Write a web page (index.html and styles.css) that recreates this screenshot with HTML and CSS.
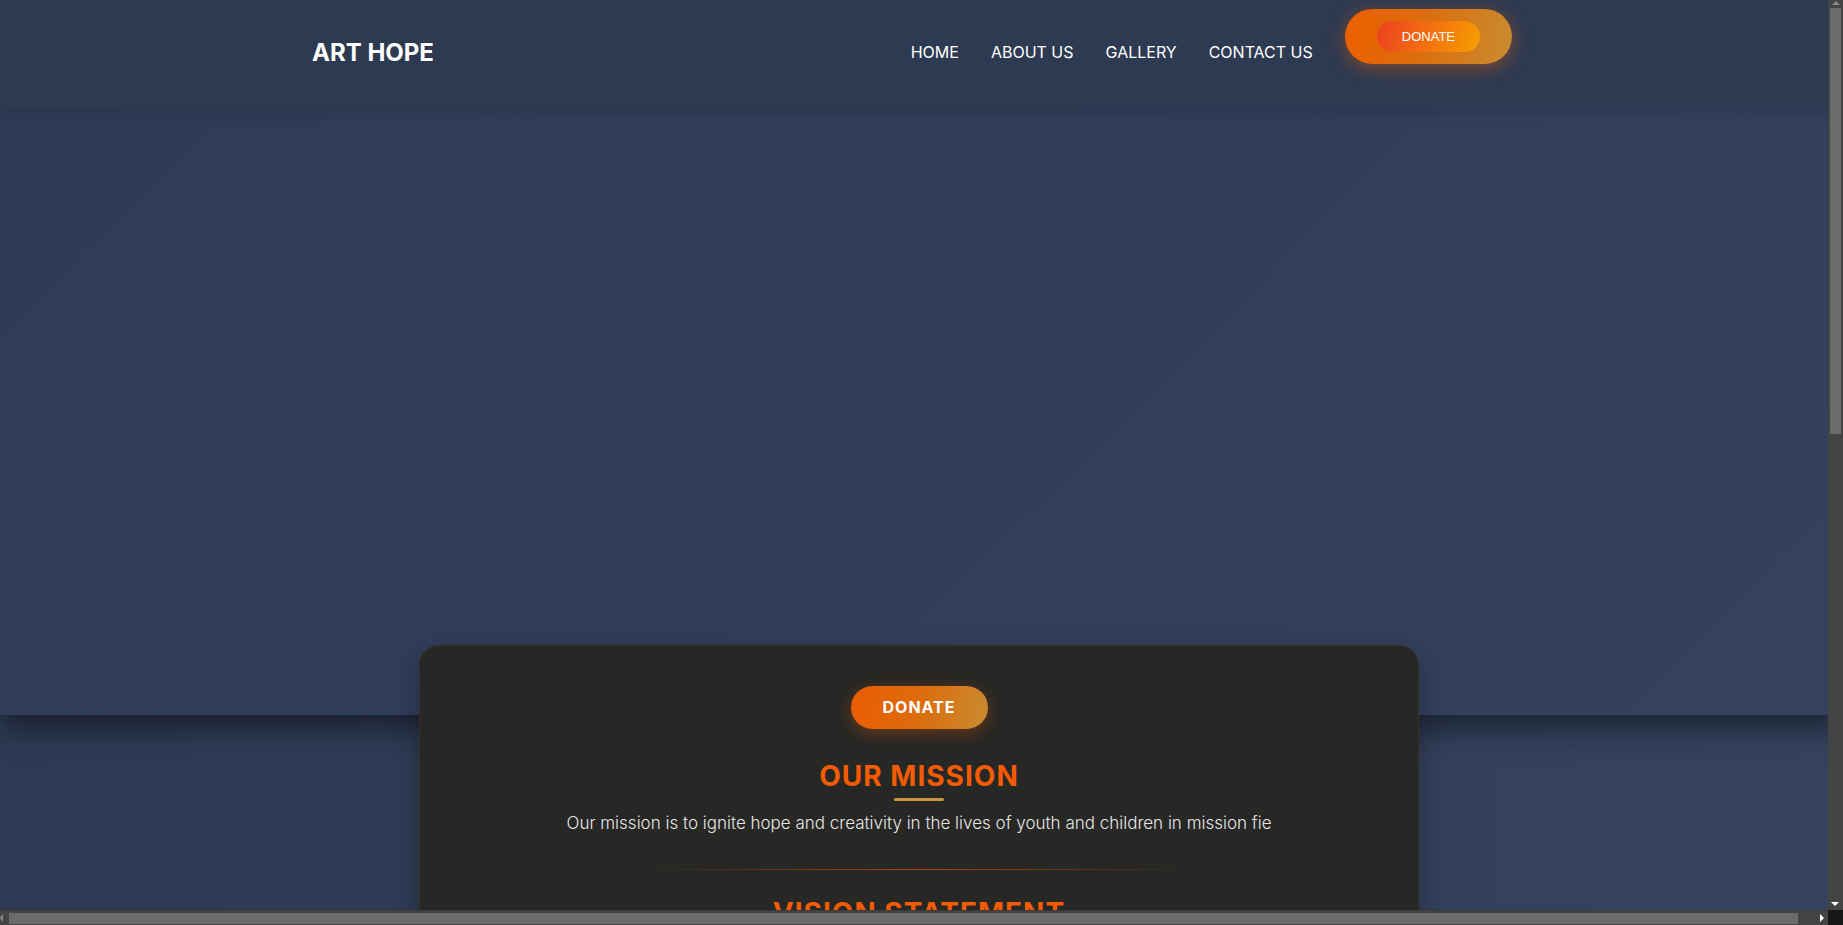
FILE: index.html
```html
<!DOCTYPE html>
<html lang="en">
<head>
<meta charset="utf-8">
<title>Art Hope</title>
<link rel="stylesheet" href="styles.css">
</head>
<body>
<div class="hero">
  <header class="site-header">
    <div class="header-inner">
      <a class="logo" href="#">ART HOPE</a>
      <nav>
        <ul class="nav-list">
          <li><a class="nav-link" href="#">HOME</a></li>
          <li><a class="nav-link" href="#">ABOUT US</a></li>
          <li><a class="nav-link" href="#">GALLERY</a></li>
          <li><a class="nav-link" href="#">CONTACT US</a></li>
          <li class="nav-donate"><button class="donate-inner">DONATE</button></li>
        </ul>
      </nav>
    </div>
  </header>
</div>
<main class="content">
  <section class="card">
    <button class="card-donate">DONATE</button>
    <div class="block">
      <h2 class="block-title">OUR MISSION</h2>
      <span class="title-bar"></span>
      <p class="block-text">Our mission is to ignite hope and creativity in the lives of youth and children in mission fie</p>
    </div>
    <hr class="divider">
    <div class="block">
      <h2 class="block-title">VISION STATEMENT</h2>
      <span class="title-bar"></span>
      <p class="block-text">We envision a world where every child can discover the healing power of art and hope.</p>
    </div>
  </section>
</main>
<div class="vscroll" aria-hidden="true">
  <span class="arrow arrow-up"></span>
  <span class="vthumb"></span>
  <span class="arrow arrow-down"></span>
</div>
<div class="hscroll" aria-hidden="true">
  <span class="arrow arrow-left"></span>
  <span class="hthumb"></span>
  <span class="arrow arrow-right"></span>
</div>
<div class="scroll-corner" aria-hidden="true"></div>
</body>
</html>
```

FILE: styles.css
```css
html {
  color-scheme: dark;
}

body {
  margin: 0;
  font-family: Inter, "Noto Sans", sans-serif;
  background: linear-gradient(to right, #2e3a54, #35435f);
  color: #fff;
}

.hero {
  width: 100vw;
  height: 715px;
  box-sizing: border-box;
  background: linear-gradient(135deg, #2f3b56 0%, #313e5b 50%, #34415f 100%);
  box-shadow: 0 14px 28px rgba(0, 0, 0, 0.45);
  position: relative;
  z-index: 1;
}

.site-header {
  height: 110px;
  padding-right: 19px;
  background: #2e3a51;
  box-shadow: 0 3px 10px rgba(0, 0, 0, 0.12);
}

.header-inner {
  width: 1200px;
  margin: 0 auto;
  padding-top: 9px;
  display: flex;
  justify-content: space-between;
  align-items: flex-start;
}

.logo {
  margin-top: 29px;
  font-size: 24px;
  line-height: 30px;
  font-weight: 700;
  color: #fff;
  text-decoration: none;
}

.nav-list {
  list-style: none;
  margin: 0;
  padding: 0;
  display: flex;
  align-items: flex-start;
  gap: 32px;
}

.nav-link {
  display: block;
  margin-top: 33px;
  font-size: 16px;
  line-height: 20px;
  font-weight: 400;
  color: #fff;
  text-decoration: none;
}

.nav-donate {
  padding: 12px 32px;
  border-radius: 28px;
  background: linear-gradient(100deg, #ec5f00 0%, #dc6d0c 45%, #c98b31 100%);
  box-shadow: 0 4px 18px rgba(232, 93, 4, 0.45);
}

.donate-inner {
  display: block;
  border: none;
  padding: 7px 25px;
  border-radius: 16px;
  font-family: "Liberation Sans", Arial, sans-serif;
  font-size: 13px;
  line-height: 17px;
  color: #fff;
  background: linear-gradient(110deg, #ee3f20 0%, #f27010 50%, #f7a000 100%);
}

.content {
  width: 100vw;
  box-sizing: border-box;
  padding-right: 5px;
  margin-top: -70px;
  padding-bottom: 87px;
  position: relative;
  z-index: 2;
}

.card {
  width: 1000px;
  min-height: 1180px;
  box-sizing: border-box;
  margin: 0 auto;
  padding: 40px 40px;
  background: #272725;
  border: 1px solid #3b2e24;
  border-radius: 20px;
  box-shadow: 0 10px 30px rgba(0, 0, 0, 0.3);
  display: flex;
  flex-direction: column;
  align-items: center;
}

.card-donate {
  border: none;
  padding: 12px 32px;
  border-radius: 22px;
  font-family: Inter, sans-serif;
  font-size: 16px;
  line-height: 19px;
  font-weight: 700;
  letter-spacing: 1px;
  color: #fff;
  background: linear-gradient(100deg, #ea5c00 0%, #dc6c0d 50%, #c98b31 100%);
  box-shadow: 0 4px 16px rgba(232, 93, 4, 0.35);
}

.block {
  display: flex;
  flex-direction: column;
  align-items: center;
}

.card-donate + .block {
  margin-top: 30px;
}

.block-title {
  margin: 0;
  font-size: 28px;
  line-height: 34px;
  font-weight: 700;
  color: #f35b04;
  letter-spacing: 1px;
}

.title-bar {
  display: block;
  width: 50px;
  height: 3px;
  margin: 5px 0 9px;
  border-radius: 2px;
  background: #c8963e;
}

.block-text {
  margin: 0;
  font-size: 17px;
  line-height: 26px;
  font-weight: 300;
  color: #e6e6e6;
  text-align: center;
}

.divider {
  width: 60%;
  height: 1px;
  border: none;
  margin: 33px auto 26px;
  background: linear-gradient(to right, rgba(170, 70, 14, 0), #aa460e 50%, rgba(170, 70, 14, 0));
}

/* painted scrollbars, as in the reference capture */
.vscroll {
  position: fixed;
  top: 0;
  right: 0;
  width: 15px;
  height: 910px;
  background: #444444;
  z-index: 10;
}

.vthumb {
  position: absolute;
  left: 2px;
  top: 8px;
  width: 11px;
  height: 426px;
  background: #6b6b6b;
}

.hscroll {
  position: fixed;
  left: 0;
  bottom: 0;
  width: 1828px;
  height: 15px;
  background: #444444;
  border-top: 1px solid #3a3a3a;
  box-sizing: border-box;
  z-index: 10;
}

.hthumb {
  position: absolute;
  top: 2px;
  left: 9px;
  width: 1789px;
  height: 11px;
  background: #6b6b6b;
}

.scroll-corner {
  position: fixed;
  right: 0;
  bottom: 0;
  width: 15px;
  height: 15px;
  background: #161616;
  z-index: 10;
}

.arrow {
  position: absolute;
  width: 0;
  height: 0;
}

.arrow-up {
  top: 1px;
  left: 4px;
  border-left: 4px solid transparent;
  border-right: 4px solid transparent;
  border-bottom: 4px solid #8a8a8a;
}

.arrow-down {
  bottom: 4px;
  left: 3px;
  border-left: 4px solid transparent;
  border-right: 4px solid transparent;
  border-top: 4px solid #ffffff;
}

.arrow-left {
  top: 3px;
  left: 0;
  border-top: 4px solid transparent;
  border-bottom: 4px solid transparent;
  border-right: 3px solid #8a8a8a;
}

.arrow-right {
  top: 3px;
  right: 4px;
  border-top: 4px solid transparent;
  border-bottom: 4px solid transparent;
  border-left: 4px solid #ffffff;
}
```
